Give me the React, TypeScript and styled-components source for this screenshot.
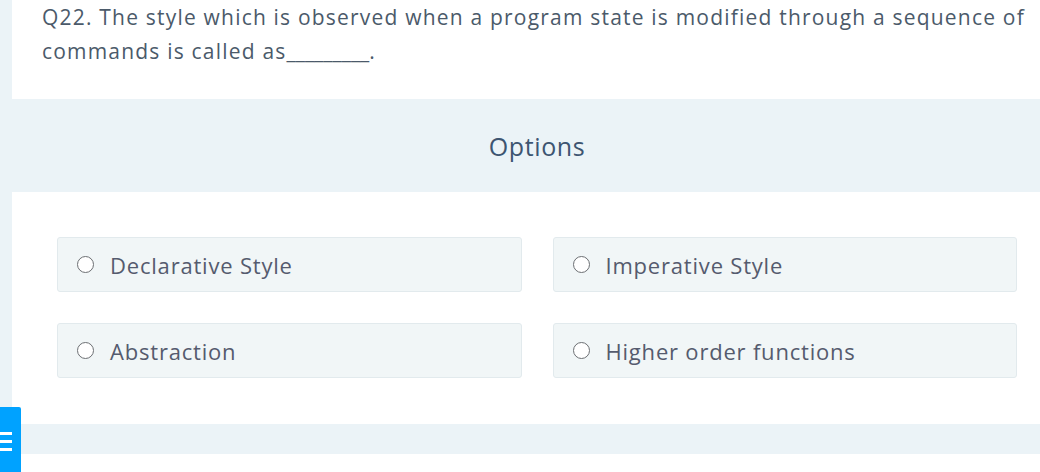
import React from "react";
import styled, { createGlobalStyle } from "styled-components";

const Global = createGlobalStyle`
  html, body {
    margin: 0;
    padding: 0;
    background: #ebf3f7;
    overflow: hidden;
  }
  body {
    font-family: "Open Sans", "Lato", sans-serif;
  }
`;

const Shell = styled.div`
  padding-left: 12px;
  width: 1050px;
`;

const Column = styled.main`
  width: 1050px;
  display: flex;
  flex-direction: column;
`;

const QuestionCard = styled.section`
  background: #ffffff;
  height: 99px;
  box-sizing: border-box;
  padding: 0 30px;
`;

const QuestionText = styled.p`
  margin: 0;
  font-size: 21px;
  letter-spacing: 1.2px;
  line-height: 34px;
  color: #4b5a6a;
  font-weight: 400;
`;

const Blank = styled.span`
  letter-spacing: 0;
`;

const OptionsHeader = styled.div`
  height: 93px;
  display: flex;
  align-items: center;
  justify-content: center;
  font-size: 25px;
  letter-spacing: 0.6px;
  color: #3d5571;
`;

const OptionsBody = styled.section`
  background: #ffffff;
  padding: 45px 45px 46px;
  display: grid;
  grid-template-columns: 1fr 1fr;
  column-gap: 31px;
  row-gap: 31px;
`;

const OptionBox = styled.label`
  height: 55px;
  box-sizing: border-box;
  background: #f1f6f7;
  border: 1px solid #e2eaed;
  border-radius: 3px;
  display: flex;
  align-items: center;
  padding-left: 19px;
  gap: 16px;
  font-size: 22px;
  letter-spacing: 0.8px;
  color: #555b6e;
  cursor: pointer;
`;

const Radio = styled.span`
  width: 17px;
  height: 17px;
  box-sizing: border-box;
  border: 1.5px solid #6c6f73;
  border-radius: 50%;
  background: #ffffff;
  flex: none;
`;

const FooterBand = styled.div`
  height: 30px;
`;

const BottomWhite = styled.div`
  background: #ffffff;
  height: 18px;
`;

const MenuButton = styled.button`
  position: fixed;
  left: 0;
  bottom: 0;
  width: 21px;
  height: 65px;
  padding: 0;
  border: none;
  background: #00a2ff;
  border-top-right-radius: 2px;
  display: flex;
  flex-direction: column;
  align-items: flex-start;
  padding-top: 25px;
  gap: 5px;
  box-sizing: border-box;
`;

const MenuLine = styled.span`
  display: block;
  width: 12px;
  height: 3px;
  background: #ffffff;
`;

const options = [
  "Declarative Style",
  "Imperative Style",
  "Abstraction",
  "Higher order functions",
];

export default function App() {
  return (
    <>
      <Global />
      <Shell>
        <Column>
          <QuestionCard>
            <QuestionText>
              Q22. The style which is observed when a program state is modified
              through a sequence of commands is called as<Blank>_________</Blank>.
            </QuestionText>
          </QuestionCard>
          <OptionsHeader>Options</OptionsHeader>
          <OptionsBody>
            {options.map((o) => (
              <OptionBox key={o}>
                <Radio />
                {o}
              </OptionBox>
            ))}
          </OptionsBody>
          <FooterBand />
          <BottomWhite />
        </Column>
      </Shell>
      <MenuButton aria-label="menu">
        <MenuLine />
        <MenuLine />
        <MenuLine />
      </MenuButton>
    </>
  );
}
